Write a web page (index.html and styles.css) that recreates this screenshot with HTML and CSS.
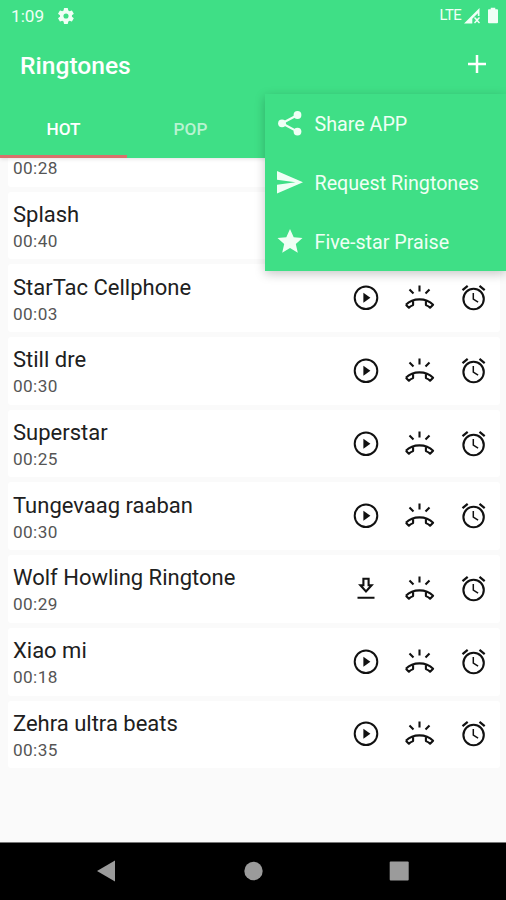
FILE: index.html
```html
<!DOCTYPE html>
<html lang="en">
<head>
<meta charset="utf-8">
<title>Ringtones</title>
<link rel="stylesheet" href="styles.css">
</head>
<body>
<svg class="defs" aria-hidden="true">
  <symbol id="play" viewBox="0 0 30 30"><circle cx="15" cy="14.700" r="11.300" fill="none" stroke="currentColor" stroke-width="2"/><path d="M12.400 9.700v10l7-5z" fill="currentColor"/></symbol>
  <symbol id="down" viewBox="0 0 30 30"><path d="M12.400 4.700h5.200v6.600h3L15 17.500l-5.600-6.200h3zM6.500 23.700h17" fill="none" stroke="currentColor" stroke-width="2.100"/></symbol>
  <symbol id="call" viewBox="0 0 30 30"><g transform="translate(-.5 0)"><path d="M15 2.500v6M5 6.500l4 4M25 6.500l-4 4" fill="none" stroke="currentColor" stroke-width="2.100"/><path d="M1.400 21.700C8.500 14.600 21.500 14.600 28.600 21.700l-3 3c-1.200-1.200-2.500-1.900-4.200-2.600v-4.300M1.400 21.700l3 3c1.200-1.200 2.500-1.900 4.200-2.600v-4.300" fill="none" stroke="currentColor" stroke-width="2.100" stroke-linejoin="round"/></g></symbol>
  <symbol id="alarm" viewBox="0 0 30 30"><g fill="none" stroke="currentColor" transform="translate(-.4 -.3)"><circle cx="15" cy="16.300" r="10.200" stroke-width="2.100"/><path d="M3.900 7.500l5.200-4.300M26.100 7.500l-5.200-4.300" stroke-width="2.200"/><path d="M14.700 10.300v6.200l4.800 3" stroke-width="1.500"/></g></symbol>
</svg>
<div class="screen">
  <header class="header">
    <div class="status">
      <span class="clock">1:09</span>
      <svg class="gear" viewBox="2 2 20 20"><path fill="currentColor" fill-rule="evenodd" d="M19.400 13a7.500 7.500 0 0 0 0-2l2.100-1.600a.5.5 0 0 0 .1-.6l-2-3.500a.5.5 0 0 0-.6-.2l-2.500 1a7.300 7.300 0 0 0-1.700-1l-.4-2.600a.5.5 0 0 0-.5-.4h-4a.5.5 0 0 0-.5.4L9 5.100a7.700 7.700 0 0 0-1.700 1l-2.500-1a.5.5 0 0 0-.6.2l-2 3.500a.5.5 0 0 0 .1.6L4.500 11a7.500 7.500 0 0 0 0 2l-2.200 1.600a.5.5 0 0 0-.1.6l2 3.500c.1.200.4.300.6.200l2.500-1a7.300 7.300 0 0 0 1.700 1l.4 2.600c0 .2.200.4.500.4h4c.2 0 .5-.2.500-.4l.4-2.600a7.700 7.700 0 0 0 1.700-1l2.500 1c.2.100.5 0 .6-.2l2-3.500a.5.5 0 0 0-.1-.6zM12 15.200a3.200 3.200 0 1 1 0-6.400 3.200 3.200 0 0 1 0 6.400z"/></svg>
      <span class="lte">LTE</span>
      <svg class="signal" viewBox="0 0 16 16"><path fill="currentColor" fill-rule="evenodd" d="M0 15.500L15.500 0v8h-1.700V5.200L8.300 10.700V15.500zM10 10l1-1 2 2 2-2 1 1-2 2.200 2 2.200-1 1-2-2-2 2-1-1 2-2.200z"/></svg>
      <svg class="battery" viewBox="0 0 11 17"><path fill="currentColor" d="M3 0h5v1.500h2q1 0 1 1V16q0 1-1 1H1q-1 0-1-1V2.500q0-1 1-1h2z"/></svg>
    </div>
    <div class="toolbar">
      <h1 class="title">Ringtones</h1>
      <svg class="plus" viewBox="0 0 18 18"><path d="M9 0v18M0 9h18" stroke="currentColor" stroke-width="2.500"/></svg>
    </div>
    <nav class="tabs"><span class="tab active">HOT</span><span class="tab">POP</span></nav>
  </header>
  <main class="list">
    <ul class="rows">
      <li class="row partial"><div class="time">00:28</div></li>
      <li class="row"><div class="info"><div class="name">Splash</div><div class="time">00:40</div></div></li>
      <li class="row"><div class="info"><div class="name">StarTac Cellphone</div><div class="time">00:03</div></div><div class="actions"><svg><use href="#play"/></svg><svg><use href="#call"/></svg><svg><use href="#alarm"/></svg></div></li>
      <li class="row"><div class="info"><div class="name">Still dre</div><div class="time">00:30</div></div><div class="actions"><svg><use href="#play"/></svg><svg><use href="#call"/></svg><svg><use href="#alarm"/></svg></div></li>
      <li class="row"><div class="info"><div class="name">Superstar</div><div class="time">00:25</div></div><div class="actions"><svg><use href="#play"/></svg><svg><use href="#call"/></svg><svg><use href="#alarm"/></svg></div></li>
      <li class="row"><div class="info"><div class="name">Tungevaag raaban</div><div class="time">00:30</div></div><div class="actions"><svg><use href="#play"/></svg><svg><use href="#call"/></svg><svg><use href="#alarm"/></svg></div></li>
      <li class="row"><div class="info"><div class="name">Wolf Howling Ringtone</div><div class="time">00:29</div></div><div class="actions"><svg><use href="#down"/></svg><svg><use href="#call"/></svg><svg><use href="#alarm"/></svg></div></li>
      <li class="row"><div class="info"><div class="name">Xiao mi</div><div class="time">00:18</div></div><div class="actions"><svg><use href="#play"/></svg><svg><use href="#call"/></svg><svg><use href="#alarm"/></svg></div></li>
      <li class="row"><div class="info"><div class="name">Zehra ultra beats</div><div class="time">00:35</div></div><div class="actions"><svg><use href="#play"/></svg><svg><use href="#call"/></svg><svg><use href="#alarm"/></svg></div></li>
    </ul>
  </main>
  <footer class="navbar">
    <svg viewBox="0 0 506 58"><g fill="#9b9b9b"><path d="M97 28l18-10.500v21z"/><circle cx="253.500" cy="28" r="9.200"/><rect x="389.700" y="18.500" width="19" height="19" rx="1"/></g></svg>
  </footer>
  <div class="menu">
    <div class="item"><svg viewBox="0 0 26 26"><path d="M20.500 4L5 12.300l15.500 8.300" fill="none" stroke="currentColor" stroke-width="2.200"/><g fill="currentColor"><circle cx="20.500" cy="4" r="3.900"/><circle cx="5" cy="12.300" r="3.900"/><circle cx="20.500" cy="20.600" r="3.900"/></g></svg><span>Share APP</span></div>
    <div class="item"><svg viewBox="0 0 26 26"><path fill="currentColor" d="M0 1l26 11.200L0 23.400v-8.700l18.500-2.500L0 9.700z"/></svg><span>Request Ringtones</span></div>
    <div class="item"><svg viewBox="0 0 26 26"><path fill="currentColor" d="M13 0l3.700 8.200 8.800.8-6.700 5.900 2 8.800L13 19l-7.800 4.700 2-8.800L.5 9l8.800-.8z"/></svg><span>Five-star Praise</span></div>
  </div>
</div>
</body>
</html>
```
FILE: styles.css
```css
* { box-sizing: border-box; }
body { margin: 0; font-family: Roboto, "Liberation Sans", sans-serif; }
.defs { position: absolute; width: 0; height: 0; }
.screen { position: relative; width: 506px; height: 900px; display: flex; flex-direction: column; background: #fafafa; overflow: hidden; }
.header { flex: none; position: relative; height: 158px; background: #3fdf86; color: #fff; display: flex; flex-direction: column; box-shadow: 0 1px 4px rgba(0,0,0,.12); }
.status { height: 32px; display: flex; align-items: center; padding: 0 8px 0 11px; color: #f0fff6; }
.clock { font-size: 17.2px; }
.gear { width: 16px; height: 16px; margin-left: 14px; }
.lte { font-size: 14.8px; letter-spacing: -.6px; margin-left: auto; margin-top: -2px; }
.signal { width: 16px; height: 16px; margin-left: 3px; }
.battery { width: 10px; height: 17px; margin-left: 8px; margin-top: -2px; }
.toolbar { height: 68px; display: flex; align-items: center; justify-content: space-between; padding: 0 20px; }
.title { margin: -2px 0 0; font-size: 24.6px; font-weight: 500; }
.plus { width: 18px; height: 18px; margin-top: -4px; }
.tabs { height: 58px; display: flex; }
.tab { width: 127px; padding-top: 2px; display: flex; align-items: center; justify-content: center; font-size: 17.2px; font-weight: 500; color: #b8f3d1; border-bottom: 3px solid transparent; }
.tab.active { color: #fff; border-color: #d9706b; }
.list { flex: 1; min-height: 0; overflow: hidden; }
.rows { list-style: none; margin: 0; padding: 0 6px 0 8px; display: flex; flex-direction: column; gap: 5px; }
.row { flex: none; height: 67.7px; background: #fff; border-radius: 3px; padding: 0 11px 0 5px; display: flex; align-items: center; justify-content: space-between; }
.row.partial { height: 28.7px; padding-bottom: 7px; border-radius: 0 0 3px 3px; }
.info { margin-top: 6px; }
.name { font-size: 22px; line-height: 26px; color: #202020; white-space: nowrap; }
.time { font-size: 17.2px; line-height: 27px; letter-spacing: .4px; color: #555; }
.actions { display: flex; gap: 24px; color: #111; }
.actions svg { width: 30px; height: 30px; }
.navbar { flex: none; height: 58px; background: #000; border-top: 1px solid #777; }
.navbar svg { display: block; width: 506px; height: 58px; }
.menu { position: absolute; left: 265px; top: 94px; width: 241px; height: 177px; background: #3fdf86; color: #effff5; box-shadow: 0 3px 10px rgba(0,0,0,.22); }
.item { height: 59px; display: flex; align-items: center; padding-left: 12px; gap: 11.5px; font-size: 19.7px; }
.item span { padding-top: 2px; }
.item svg { width: 26px; height: 26px; }
```
